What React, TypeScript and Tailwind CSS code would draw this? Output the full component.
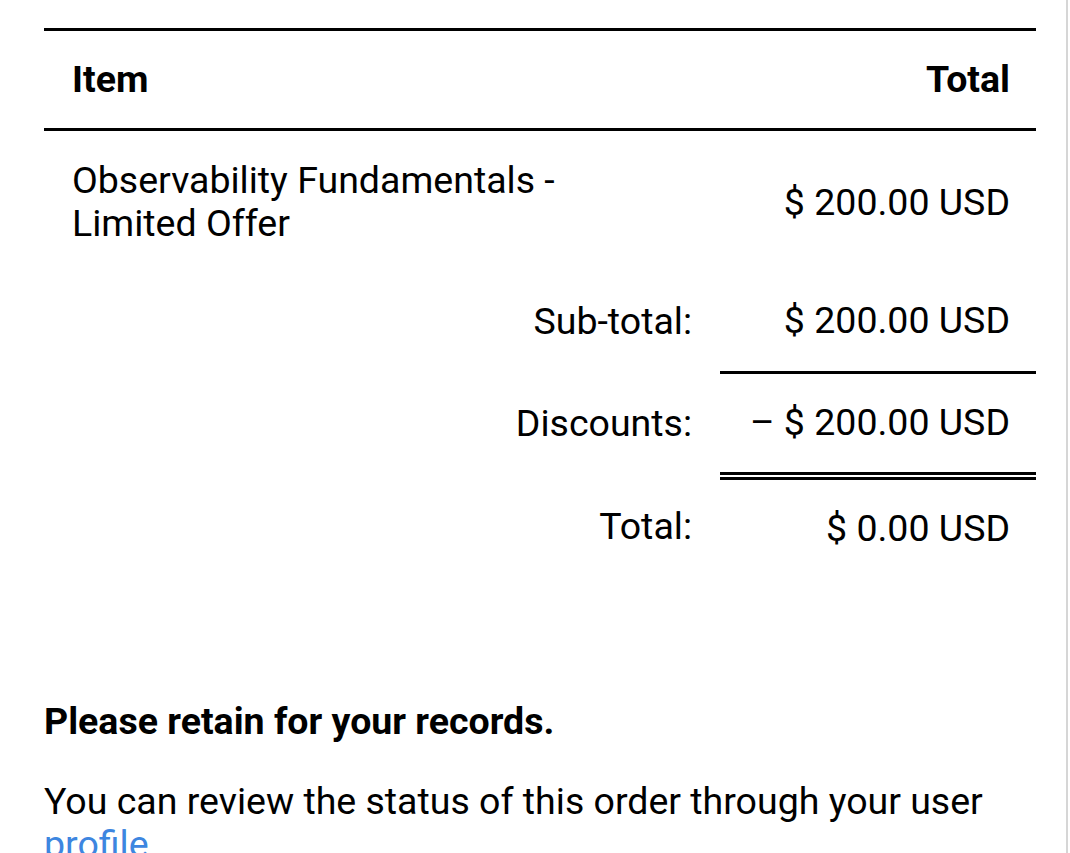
export default function App() {
  return (
    <div className="min-h-screen w-[1068px] border-r-2 border-[#d6d6d6] bg-white pl-[44px] pr-[30px] pt-[28px] font-['Roboto',sans-serif] text-[37.5px] leading-[43px] text-black">
      {/* Order summary */}
      <table className="w-full border-collapse">
        <colgroup>
          <col />
          <col className="w-[316px]" />
        </colgroup>
        <thead>
          <tr>
            <th className="border-y-[3px] border-black px-[28px] pt-[27px] pb-[27px] text-left font-bold">Item</th>
            <th className="border-y-[3px] border-black pl-[28px] pr-[26px] pt-[27px] pb-[27px] text-right font-bold">Total</th>
          </tr>
        </thead>
        <tbody>
          <tr>
            <td className="px-[28px] pt-[28px] pb-[27px] text-left">
              <div className="max-w-[520px]">Observability Fundamentals - Limited Offer</div>
            </td>
            <td className="whitespace-nowrap pl-[28px] pr-[26px] pt-[28px] pb-[27px] text-right align-middle">$ 200.00 USD</td>
          </tr>
          <tr>
            <td className="px-[28px] pt-[27px] pb-[29px] text-right">Sub-total:</td>
            <td className="whitespace-nowrap border-b-[3px] border-black pl-[28px] pr-[26px] pt-[27px] pb-[29px] text-right">$ 200.00 USD</td>
          </tr>
          <tr>
            <td className="px-[28px] pt-[27px] pb-[28px] text-right">Discounts:</td>
            <td className="whitespace-nowrap border-b-[8px] border-double border-black pl-[28px] pr-[26px] pt-[27px] pb-[28px] text-right">– $ 200.00 USD</td>
          </tr>
          <tr>
            <td className="px-[28px] pt-[27px] pb-[22px] text-right">Total:</td>
            <td className="whitespace-nowrap pl-[28px] pr-[26px] pt-[27px] pb-[22px] text-right">$ 0.00 USD</td>
          </tr>
        </tbody>
      </table>

      <p className="mt-[128px] font-bold">Please retain for your records.</p>
      <p className="mt-[37px]">
        You can review the status of this order through your user{" "}
        <a href="#" className="text-[#3d86e0]">profile</a>.
      </p>
    </div>
  );
}
